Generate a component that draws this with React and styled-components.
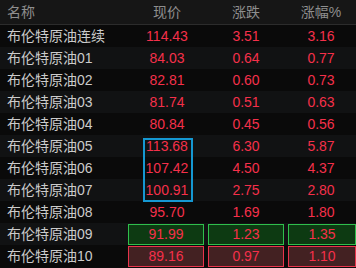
import React from "react"
import styled, { createGlobalStyle } from "styled-components"

const GlobalStyle = createGlobalStyle`
  html, body {
    margin: 0;
    padding: 0;
    background: #0b0b0b;
  }
  body {
    font-family: "Liberation Sans", "Noto Sans CJK SC", sans-serif;
  }
`

const rows = [
  { name: "布伦特原油连续", price: "114.43", chg: "3.51", pct: "3.16" },
  { name: "布伦特原油01", price: "84.03", chg: "0.64", pct: "0.77" },
  { name: "布伦特原油02", price: "82.81", chg: "0.60", pct: "0.73" },
  { name: "布伦特原油03", price: "81.74", chg: "0.51", pct: "0.63" },
  { name: "布伦特原油04", price: "80.84", chg: "0.45", pct: "0.56" },
  { name: "布伦特原油05", price: "113.68", chg: "6.30", pct: "5.87" },
  { name: "布伦特原油06", price: "107.42", chg: "4.50", pct: "4.37" },
  { name: "布伦特原油07", price: "100.91", chg: "2.75", pct: "2.80" },
  { name: "布伦特原油08", price: "95.70", chg: "1.69", pct: "1.80" },
  { name: "布伦特原油09", price: "91.99", chg: "1.23", pct: "1.35", mark: "up" },
  { name: "布伦特原油10", price: "89.16", chg: "0.97", pct: "1.10", mark: "down" },
]

const App = () => {
  return (
    <>
      <GlobalStyle />
      <Board>
        <Header>
          <HeadName>名称</HeadName>
          <HeadCell>现价</HeadCell>
          <HeadCell>涨跌</HeadCell>
          <HeadCell>涨幅%</HeadCell>
        </Header>
        {rows.map((r, i) => (
          <Row key={r.name} $alt={i % 2 === 1}>
            <Name>{r.name}</Name>
            <Cell>{r.mark ? <Mark $kind={r.mark} $first>{r.price}</Mark> : r.price}</Cell>
            <Cell>{r.mark ? <Mark $kind={r.mark}>{r.chg}</Mark> : r.chg}</Cell>
            <Cell>{r.mark ? <Mark $kind={r.mark} $last>{r.pct}</Mark> : r.pct}</Cell>
          </Row>
        ))}
        <Focus />
      </Board>
    </>
  )
}

export default App

const Board = styled.div`
  position: relative;
  width: 356px;
  height: 268px;
  overflow: hidden;
  background: #0b0b0b;
  font-size: 14px;
`

const grid = `
  display: grid;
  grid-template-columns: 128px 78px 80px 70px;
  align-items: center;
`

const Header = styled.div`
  ${grid}
  height: 24px;
  background: #161616;
  border-bottom: 1px solid #2c2c2c;
  color: #8e8e8e;
  line-height: 24px;
`

const HeadName = styled.div`
  padding-left: 7px;
`

const HeadCell = styled.div`
  text-align: center;
`

const Row = styled.div`
  ${grid}
  height: 22px;
  line-height: 22px;
  background: ${(p) => (p.$alt ? "#111213" : "#0a0a0a")};
`

const Name = styled.div`
  padding-left: 7px;
  color: #cbcbcb;
  white-space: nowrap;
`

const Cell = styled.div`
  height: 22px;
  text-align: center;
  color: #f5304a;
  display: flex;
  justify-content: center;
  align-items: center;
`

const Mark = styled.div`
  box-sizing: border-box;
  flex: 1;
  height: 21px;
  line-height: 19px;
  margin: 0 ${(p) => (p.$last ? "0" : "2px")} 0 ${(p) => (p.$first ? "0" : "2px")};
  border: 1px solid ${(p) => (p.$kind === "up" ? "#2fbf4c" : "#e8344c")};
  background: ${(p) => (p.$kind === "up" ? "#0d3a12" : "#432122")};
`

const Focus = styled.div`
  position: absolute;
  left: 143px;
  top: 138px;
  width: 50px;
  height: 64px;
  box-sizing: border-box;
  border: 2px solid #1598d2;
  pointer-events: none;
`
